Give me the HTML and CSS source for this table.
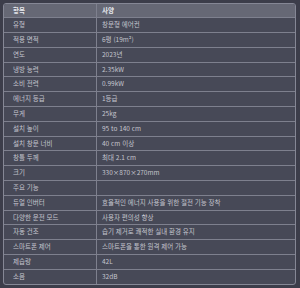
FILE: index.html
```html
<!DOCTYPE html>
<html lang="ko">
<head>
<meta charset="utf-8">
<link rel="stylesheet" href="styles.css">
</head>
<body>
<div class="spec">
  <table class="spec-table">
    <thead>
      <tr><th>항목</th><th>사양</th></tr>
    </thead>
    <tbody>
      <tr><td>유형</td><td>창문형 에어컨</td></tr>
      <tr><td>적용 면적</td><td>6평 (19m²)</td></tr>
      <tr><td>연도</td><td>2023년</td></tr>
      <tr><td>냉방 능력</td><td>2.35kW</td></tr>
      <tr><td>소비 전력</td><td>0.99kW</td></tr>
      <tr><td>에너지 등급</td><td>1등급</td></tr>
      <tr><td>무게</td><td>25kg</td></tr>
      <tr><td>설치 높이</td><td>95 to 140 cm</td></tr>
      <tr><td>설치 창문 너비</td><td>40 cm 이상</td></tr>
      <tr><td>창틀 두께</td><td>최대 2.1 cm</td></tr>
      <tr><td>크기</td><td>330×870×270mm</td></tr>
      <tr><td>주요 기능</td><td></td></tr>
      <tr><td>듀얼 인버터</td><td>효율적인 에너지 사용을 위한 절전 기능 장착</td></tr>
      <tr><td>다양한 운전 모드</td><td>사용자 편의성 향상</td></tr>
      <tr><td>자동 건조</td><td>습기 제거로 쾌적한 실내 환경 유지</td></tr>
      <tr><td>스마트폰 제어</td><td>스마트폰을 통한 원격 제어 가능</td></tr>
      <tr><td>제습량</td><td>42L</td></tr>
      <tr><td>소음</td><td>32dB</td></tr>
    </tbody>
  </table>
</div>
</body>
</html>
```
FILE: styles.css
```css
html, body {
  margin: 0;
  padding: 0;
  background: #3c3d4a;
}
body {
  padding: 3px 4px 4px 3px;
  font-family: "Noto Sans CJK KR", "Noto Sans", sans-serif;
  font-size: 6.5px;
  color: #c4c5ce;
}
.spec {
  border: 1px solid #858795;
  border-radius: 3px;
  overflow: hidden;
  background: #474957;
}
.spec-table {
  width: 100%;
  border-collapse: collapse;
  table-layout: fixed;
}
.spec-table th,
.spec-table td {
  text-align: left;
  font-weight: normal;
  padding: 0 5px;
  height: 13.8px;
  line-height: 13.8px;
  border-bottom: 1px solid #7e808e;
  white-space: nowrap;
}
.spec-table th {
  height: 13.3px;
  line-height: 13.3px;
  background: #666875;
  color: #e8e8ee;
  font-weight: bold;
}
.spec-table tr > :first-child {
  width: 78px;
  padding-left: 9px;
  border-right: 1px solid #7e808e;
}
.spec-table tbody tr:last-child td {
  border-bottom: none;
}
```
